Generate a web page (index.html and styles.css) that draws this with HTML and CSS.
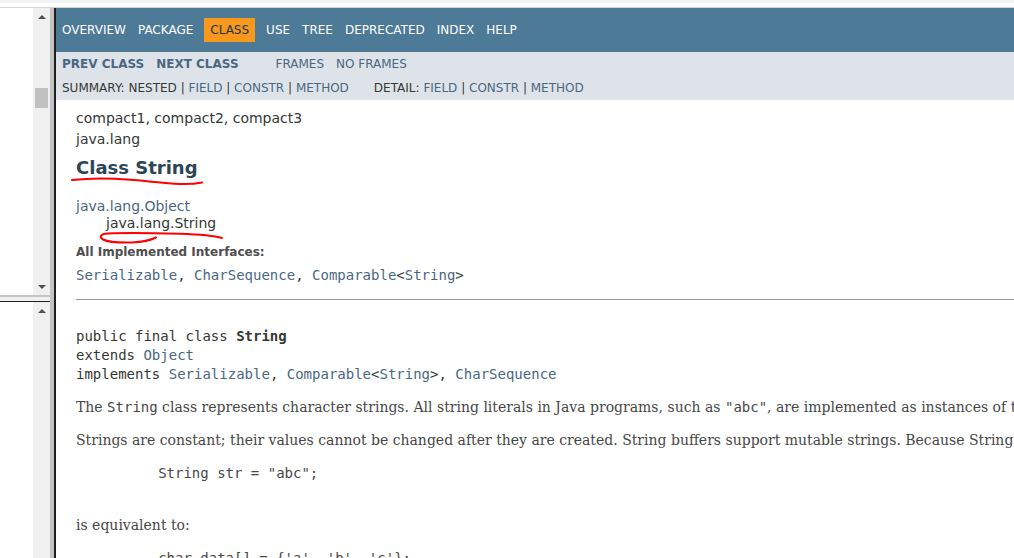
FILE: index.html
```html
<!DOCTYPE html>
<html lang="en">
<head>
<meta charset="utf-8">
<title>String (Java Platform SE 8)</title>
<link rel="stylesheet" href="styles.css">
</head>
<body>
<div class="topstrip"></div>
<div class="frames">
  <div class="leftcol">
    <div class="pane pane-top">
      <div class="pane-body"></div>
      <div class="scrollbar">
        <div class="arrowbox"><span class="arrow up"></span></div>
        <div class="thumb"></div>
        <div class="arrowbox bottom"><span class="arrow down"></span></div>
      </div>
    </div>
    <div class="hdivider"></div>
    <div class="pane pane-bottom">
      <div class="pane-body"></div>
      <div class="scrollbar">
        <div class="arrowbox"><span class="arrow up"></span></div>
      </div>
    </div>
  </div>
  <div class="vdivider"></div>
  <div class="main">
    <div class="main-inner">
      <div class="topnav">
        <ul class="navlist">
          <li><a>Overview</a></li>
          <li><a>Package</a></li>
          <li class="current">Class</li>
          <li><a>Use</a></li>
          <li><a>Tree</a></li>
          <li><a>Deprecated</a></li>
          <li><a>Index</a></li>
          <li><a>Help</a></li>
        </ul>
      </div>
      <div class="subnav">
        <div class="subnav-row">
          <ul class="navlist">
            <li><a class="strong">Prev Class</a></li>
            <li><a class="strong">Next Class</a></li>
          </ul>
          <ul class="navlist">
            <li><a>Frames</a></li>
            <li><a>No Frames</a></li>
          </ul>
        </div>
        <div class="subnav-row2">
          <ul class="subnavlist">
            <li>Summary:&nbsp;</li>
            <li>Nested&nbsp;|&nbsp;</li>
            <li><a>Field</a>&nbsp;|&nbsp;</li>
            <li><a>Constr</a>&nbsp;|&nbsp;</li>
            <li><a>Method</a></li>
          </ul>
          <ul class="subnavlist">
            <li>Detail:&nbsp;</li>
            <li><a>Field</a>&nbsp;|&nbsp;</li>
            <li><a>Constr</a>&nbsp;|&nbsp;</li>
            <li><a>Method</a></li>
          </ul>
        </div>
      </div>
      <div class="header">
        <div class="subtitle">compact1, compact2, compact3</div>
        <div class="subtitle">java.lang</div>
        <h2 class="title">Class String</h2>
      </div>
      <div class="content">
        <ul class="inheritance">
          <li><a>java.lang.Object</a></li>
          <li>
            <ul class="inheritance">
              <li>java.lang.String</li>
            </ul>
          </li>
        </ul>
        <dl class="interfaces">
          <dt>All Implemented Interfaces:</dt>
          <dd><a>Serializable</a>, <a>CharSequence</a>, <a>Comparable</a>&lt;<a>String</a>&gt;</dd>
        </dl>
        <hr class="rule">
        <pre class="signature">public final class <b>String</b>
extends <a>Object</a>
implements <a>Serializable</a>, <a>Comparable</a>&lt;<a>String</a>&gt;, <a>CharSequence</a></pre>
        <div class="block">
          <p class="para">The <code>String</code> class represents character strings. All string literals in Java programs, such as <code>"abc"</code>, are implemented as instances of this class.</p>
          <p class="para">Strings are constant; their values cannot be changed after they are created. String buffers support mutable strings. Because String objects are immutable they can be shared. For example:</p>
          <pre class="example">     String str = "abc";</pre>
          <p class="para para-gap">is equivalent to:</p>
          <pre class="example">     char data[] = {'a', 'b', 'c'};</pre>
        </div>
      </div>
    </div>
  </div>
</div>
<svg class="annotations" width="1014" height="558" viewBox="0 0 1014 558" aria-hidden="true">
  <path d="M72,180 C85,178.5 100,178 115,178.8 C140,180 160,183 180,184 C190,184.3 197,183.5 202,182.5" />
  <path d="M222,238 C215,236 200,234.5 180,233.8 C150,233 120,233 108,233.5 C100,234 99,237 103,239.5 C108,242 120,242.8 132,242.5 C142,242 150,240.5 156,237.5" />
</svg>
</body>
</html>
```

FILE: styles.css
```css
* { box-sizing: border-box; }
html, body { margin: 0; padding: 0; }
body {
  width: 1014px;
  height: 558px;
  overflow: hidden;
  position: relative;
  background: #ffffff;
  font-family: "DejaVu Sans", Arial, sans-serif;
  font-size: 14px;
  color: #353833;
}
a { color: #4A6782; text-decoration: none; }

.topstrip {
  height: 8px;
  background: #ffffff;
  border-top: 3px solid #f1f3f4;
  border-bottom: 1px solid #d3d3d3;
}
.frames { display: flex; height: 550px; }

/* left frames */
.leftcol { width: 50px; display: flex; flex-direction: column; }
.pane { display: flex; }
.pane-top { height: 287px; }
.pane-bottom { flex: 1; }
.pane-body { flex: 1; background: #ffffff; }
.scrollbar {
  width: 17px;
  background: #f0f0f0;
  display: flex;
  flex-direction: column;
  align-items: center;
}
.arrowbox {
  width: 17px;
  height: 17px;
  display: flex;
  align-items: center;
  justify-content: center;
}
.arrowbox.bottom { margin-top: auto; }
.arrow { width: 0; height: 0; border-left: 4px solid transparent; border-right: 4px solid transparent; }
.arrow.up { border-bottom: 4px solid #505050; }
.arrow.down { border-top: 4px solid #505050; }
.thumb { width: 13px; height: 20px; margin-top: 63px; background: #c1c1c1; }
.hdivider {
  height: 7px;
  background: #f0f0f0;
  border-top: 2px solid #c4c4c4;
  border-bottom: 1px solid #1f1f1f;
}
.vdivider {
  width: 6px;
  background: #1f1f1f;
  border-left: 4px solid #c4c4c4;
}

/* main frame */
.main { flex: 1; overflow: hidden; }
.main-inner { width: 1800px; }

.navlist { display: flex; list-style: none; margin: 0 25px 0 0; padding: 0; }
.navlist li { padding: 5px 6px; line-height: 14px; text-transform: uppercase; }

.topnav { background: #4D7A97; height: 44px; padding-top: 10px; font-size: 12px; }
.topnav a { color: #ffffff; }
.topnav li.current { background: #F8981D; color: #253441; margin: 0 5px; }

.subnav { background: #dee3e9; height: 48px; font-size: 12px; }
.subnav-row { display: flex; }
.subnav .strong { font-weight: bold; }
.subnav-row2 { display: flex; padding: 5px 0 0 6px; }
.subnavlist { display: flex; list-style: none; margin: 0 25px 0 0; padding: 0; }
.subnavlist li { line-height: 14px; text-transform: uppercase; white-space: pre; }

.header { margin: 0 20px; padding-top: 5px; }
.subtitle { margin-top: 5px; line-height: 16px; }
.title { color: #2c4557; font-size: 18px; font-weight: bold; margin: 10px 0; line-height: 21px; }

.content { padding: 10px 20px; }
.inheritance { margin: 0; padding: 0; list-style: none; }
.inheritance li { line-height: 16px; }
.inheritance .inheritance { margin-left: 15px; padding-left: 15px; padding-top: 1px; }

.interfaces { margin: 14px 0 0; }
.interfaces dt { font-size: 12px; font-weight: bold; color: #4E4E4E; line-height: 14px; }
.interfaces dd { margin: 8px 0 0; font-family: "DejaVu Sans Mono", monospace; line-height: 16px; }

.rule { margin: 16px 0 0; border: 0; border-top: 1px solid #9a9a9a; height: 1px; }

pre, code { font-family: "DejaVu Sans Mono", monospace; font-size: 14px; }
.signature { margin: 27px 0 0; line-height: 19px; }
.signature b { font-weight: bold; }

.block { font-family: "DejaVu Serif", Georgia, serif; color: #474747; margin-top: 14px; }
.para { margin: 14px 0 0; line-height: 19px; }
.block .para:first-child { margin-top: 0; }
.para-gap { margin-top: 33px; }
.example { margin: 14px 0 0 40px; line-height: 19px; color: #474747; }

.annotations {
  position: absolute;
  left: 0;
  top: 0;
  pointer-events: none;
}
.annotations path {
  fill: none;
  stroke: #ff0000;
  stroke-width: 2;
  stroke-linecap: round;
  stroke-linejoin: round;
}
```
